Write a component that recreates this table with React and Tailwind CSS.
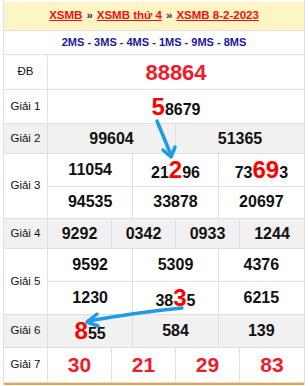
import React from 'react'

const B = 'border-[#dfdfdf]'
const hi = 'text-[#ff0000] text-[24px]'

// one prize row: label on the left, number cells in a grid on the right
function Row({ label, h, gray, children }) {
  return (
    <div className={`flex border-b ${B} ${gray ? 'bg-[#f1f1f1]' : 'bg-white'}`} style={{ height: h }}>
      <div className={`w-[44px] shrink-0 border-r ${B} flex items-center justify-center text-[11.5px] text-[#111]`}>{label}</div>
      <div className="flex-1 flex flex-col">{children}</div>
    </div>
  )
}

function Line({ cols, items, last, red }) {
  const grid = cols === 4 ? 'grid-cols-4' : cols === 3 ? 'grid-cols-3' : cols === 2 ? 'grid-cols-2' : 'grid-cols-1'
  return (
    <div className={`flex-1 grid ${grid} ${last ? '' : `border-b ${B}`}`}>
      {items.map((n, i) => (
        <div key={i} className={`flex items-center justify-center font-bold ${red ? 'text-[#ed1c2e] text-[21px]' : 'text-[#111] text-[16px]'} ${i < items.length - 1 ? `border-r ${B}` : ''}`}>
          {n}
        </div>
      ))}
    </div>
  )
}

const Mix = ({ parts }) => (
  <span className="flex items-baseline leading-none">
    {parts.map((p, i) => <span key={i} className={i % 2 ? hi : ''}>{p}</span>)}
  </span>
)

export default function App() {
  return (
    <div className="relative w-[308px] h-[386px] bg-white font-['Liberation_Sans',Arial,sans-serif]">
      <div className={`ml-[3px] pt-[2px] w-[302px] border-x ${B}`}>
        <div className={`h-[29px] bg-[#fff4c4] border-b ${B} flex items-center justify-center text-[11.5px] font-bold`}>
          <span className="text-[#ee1111] underline">XSMB</span>
          <span className="text-[#333] mx-[4px]">»</span>
          <span className="text-[#ee1111] underline">XSMB thứ 4</span>
          <span className="text-[#333] mx-[4px]">»</span>
          <span className="text-[#ee1111] underline">XSMB 8-2-2023</span>
        </div>
        <div className={`h-[24px] border-b ${B} flex items-center justify-center text-[11px] font-bold text-[#1a1a96]`}>
          2MS - 3MS - 4MS - 1MS - 9MS - 8MS
        </div>
        <Row label="ĐB" h={35}>
          <Line cols={1} last items={[<span className="text-[22px] text-[#ed1c2e]">88864</span>]} />
        </Row>
        <Row label="Giải 1" h={34}>
          <Line cols={1} last items={[<Mix parts={['', '5', '8679']} />]} />
        </Row>
        <Row label="Giải 2" h={30} gray>
          <Line cols={2} last items={['99604', '51365']} />
        </Row>
        <Row label="Giải 3" h={65}>
          <Line cols={3} items={['11054', <Mix parts={['21', '2', '96']} />, <Mix parts={['73', '69', '3']} />]} />
          <Line cols={3} last items={['94535', '33878', '20697']} />
        </Row>
        <Row label="Giải 4" h={30} gray>
          <Line cols={4} last items={['9292', '0342', '0933', '1244']} />
        </Row>
        <Row label="Giải 5" h={66}>
          <Line cols={3} items={['9592', '5309', '4376']} />
          <Line cols={3} last items={['1230', <Mix parts={['38', '3', '5']} />, '6215']} />
        </Row>
        <Row label="Giải 6" h={33} gray>
          <Line cols={3} last items={[<Mix parts={['', '8', '55']} />, '584', '139']} />
        </Row>
        <Row label="Giải 7" h={35}>
          <Line cols={4} last red items={['30', '21', '29', '83']} />
        </Row>
        <div className="h-[2px] bg-[#f0a04b]" />
      </div>

      {/* hand-drawn arrows over the table */}
      <svg className="absolute inset-0 pointer-events-none" width="308" height="386" viewBox="0 0 308 386">
        <g stroke="#1e9be3" strokeWidth="3.5" strokeLinecap="round" strokeLinejoin="round" fill="none">
          <path d="M157 121 L171 155" />
          <path d="M163 150 L171 157 L175 147" />
          <path d="M182 308 Q140 312 88 321" />
          <path d="M97 314 L87 322 L98 326" />
        </g>
      </svg>
    </div>
  )
}
